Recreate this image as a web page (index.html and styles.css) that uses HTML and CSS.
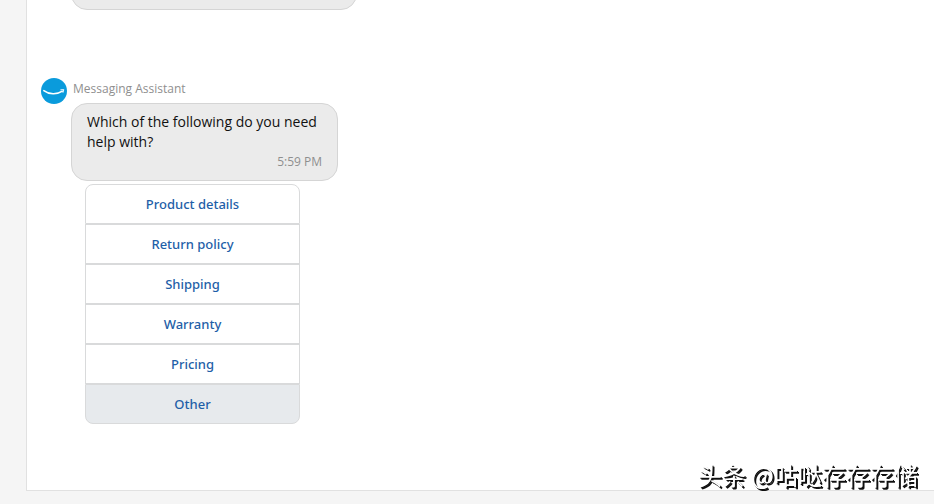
FILE: index.html
```html
<!DOCTYPE html>
<html lang="en">
<head>
  <meta charset="utf-8">
  <title>Messaging Assistant</title>
  <link rel="stylesheet" href="styles.css">
</head>
<body>

  <main class="chat">
    <div class="bubble bubble-prev"></div>

    <section class="message">
      <svg class="avatar" viewBox="0 0 26 26" aria-hidden="true">
        <circle cx="13" cy="13" r="13" fill="#0a9bdc"/>
        <path d="M2.8 12.6 C8 16.6 16 16.8 21.4 13.2" fill="none" stroke="#fff" stroke-width="1.5" stroke-linecap="round"/>
        <path d="M19.8 11.8 L22.8 11.6 L22 14.4" fill="none" stroke="#fff" stroke-width="0.9" stroke-linecap="round" stroke-linejoin="round"/>
      </svg>

      <div class="content">
        <div class="sender">Messaging Assistant</div>
        <div class="bubble">
          <p>Which of the following do you need help with?</p>
          <time>5:59 PM</time>
        </div>
        <div class="options">
          <button type="button">Product details</button>
          <button type="button">Return policy</button>
          <button type="button">Shipping</button>
          <button type="button">Warranty</button>
          <button type="button">Pricing</button>
          <button type="button" class="active">Other</button>
        </div>
      </div>
    </section>
  </main>

  <div class="watermark" lang="zh-CN">头条 @咕哒存存存储</div>

</body>
</html>
```

FILE: styles.css
```css
* {
  box-sizing: border-box;
}

body {
  margin: 0;
  background: #f5f5f5;
  font-family: "Open Sans", "Noto Sans", sans-serif;
  font-size: 14px;
  line-height: 20px;
  color: #111;
}

.chat {
  display: flow-root;
  margin-left: 26px;
  padding: 0 14px 66px;
  background: #fff;
  border-left: 1px solid #e1e1e1;
  border-bottom: 1px solid #e1e1e1;
}

.bubble {
  width: 267px;
  padding: 8px 15px;
  background: #ebebeb;
  border: 1px solid #d5d5d5;
  border-radius: 16px;
}

/* older message, scrolled mostly out of view */
.bubble-prev {
  width: 286px;
  height: 60px;
  margin: -50px 0 0 30px;
}

.message {
  display: flex;
  gap: 4px;
  margin-top: 68px;
}

.avatar {
  flex: none;
  width: 26px;
  height: 26px;
}

.sender {
  padding: 1px 0 4px 2px;
  font-size: 12px;
  color: #8f8f8f;
}

.bubble p {
  margin: 0;
}

.bubble time {
  display: block;
  font-size: 12px;
  text-align: right;
  color: #8f8f8f;
}

.options {
  width: 215px;
  margin: 3px 0 0 14px;
}

.options button {
  display: block;
  width: 100%;
  height: 40px;
  padding: 0;
  background: #fff;
  border: 1px solid #d9dadb;
  font: 500 13px/20px "Noto Sans", "Open Sans", sans-serif;
  color: #1f5fa8;
  cursor: pointer;
}

.options button:first-child {
  border-radius: 8px 8px 0 0;
}

.options button:last-child {
  border-radius: 0 0 8px 8px;
}

.options button:hover,
.options .active {
  background: #e7eaed;
}

.watermark {
  position: fixed;
  right: 16px;
  bottom: 11px;
  font: 24px/36px "Noto Sans CJK SC", sans-serif;
  color: #fff;
  text-shadow: 1px 1px 0 #111, 2px 2px 0 #111;
}
```
